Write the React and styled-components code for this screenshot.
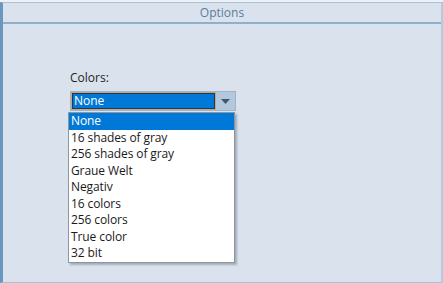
import React, { useState } from "react";
import styled, { createGlobalStyle } from "styled-components";

const GlobalStyle = createGlobalStyle`
  html, body {
    margin: 0;
    padding: 0;
    background: #eef2f7;
  }
  body {
    font-family: "Open Sans", "Noto Sans", sans-serif;
  }
`;

const options = [
  "None",
  "16 shades of gray",
  "256 shades of gray",
  "Graue Welt",
  "Negativ",
  "16 colors",
  "256 colors",
  "True color",
  "32 bit",
];

export default function App() {
  const [value, setValue] = useState("None");

  return (
    <>
      <GlobalStyle />
      <Panel>
        <Header>Options</Header>
        <Body>
          <Label>Colors:</Label>
          <Combo>
            <ComboField>{value}</ComboField>
            <ComboArrow>
              <svg width="9" height="5" viewBox="0 0 9 5">
                <path d="M0 0 H9 L4.5 5 Z" fill="#3d5875" />
              </svg>
            </ComboArrow>
            <List>
              {options.map((o) => (
                <Item key={o} active={o === value} onClick={() => setValue(o)}>
                  {o}
                </Item>
              ))}
            </List>
          </Combo>
        </Body>
      </Panel>
    </>
  );
}

const Panel = styled.div`
  margin-top: 2px;
  height: 279px;
  background: #dae3ed;
  border-top: 1px solid #a7c1d7;
  border-left: 3px solid #6b97be;
  border-right: 2px solid #b3cbe0;
  border-bottom: 1px solid #a7c1d7;
  display: flex;
  flex-direction: column;
`;

const Header = styled.div`
  height: 19px;
  line-height: 19px;
  text-align: center;
  font-size: 12px;
  color: #5b7c9b;
  border-bottom: 2px solid #8eb0cb;
`;

const Body = styled.div`
  padding: 45px 0 0 67px;
  display: flex;
  flex-direction: column;
  align-items: flex-start;
`;

const Label = styled.div`
  font-size: 12px;
  color: #1e1e1e;
  height: 18px;
  line-height: 18px;
  margin-bottom: 4px;
`;

const Combo = styled.div`
  position: relative;
  display: flex;
  width: 166px;
  height: 20px;
  border: 1px solid #9fb4c8;
  box-sizing: border-box;
`;

const ComboField = styled.div`
  flex: 1;
  background: #0078d7;
  color: #fff;
  font-size: 12px;
  line-height: 16px;
  padding-left: 2px;
  border: 1px solid #c9a57e;
  outline: 1px solid #1f3a58;
  outline-offset: -2px;
`;

const ComboArrow = styled.div`
  width: 19px;
  background: #b4c7db;
  display: flex;
  align-items: center;
  justify-content: center;
`;

const List = styled.div`
  position: absolute;
  top: 20px;
  left: -3px;
  width: 167px;
  background: #fff;
  border: 1px solid #8c96a0;
  box-shadow: 2px 2px 2px rgba(60, 70, 80, 0.35);
  box-sizing: border-box;
`;

const Item = styled.div`
  height: 16.5px;
  line-height: 16.5px;
  padding-left: 2px;
  font-size: 12px;
  letter-spacing: -0.1px;
  color: ${(p) => (p.active ? "#fff" : "#1a1a1a")};
  background: ${(p) => (p.active ? "#0078d7" : "transparent")};
  white-space: nowrap;
  cursor: default;
`;
